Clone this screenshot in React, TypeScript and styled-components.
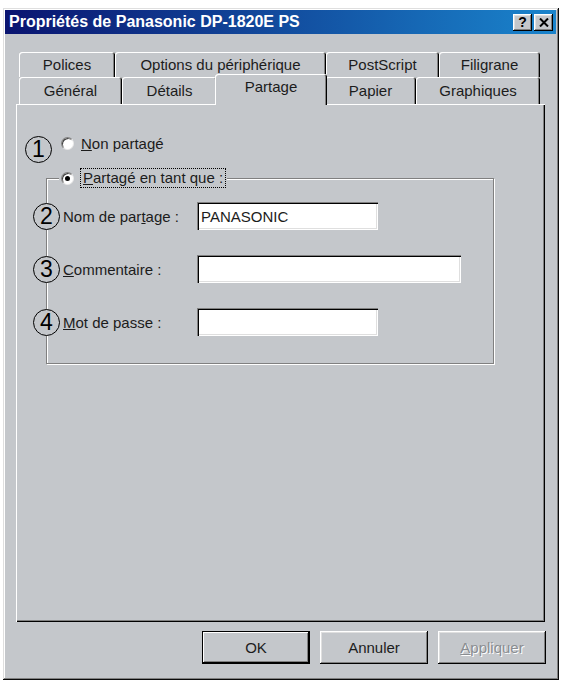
import styled, { createGlobalStyle } from 'styled-components';

const FACE = '#c4c7cb';

const GlobalStyle = createGlobalStyle`
  html, body {
    margin: 0;
    padding: 0;
    background: #fff;
  }
  body {
    font-family: "Liberation Sans", Arial, sans-serif;
    color: #1c1c1c;
  }
`;

const row1 = [
  { label: 'Polices', w: 96 },
  { label: 'Options du périphérique', w: 211 },
  { label: 'PostScript', w: 113 },
  { label: 'Filigrane', w: 101 },
];

const row2 = [
  { label: 'Général', w: 103 },
  { label: 'Détails', w: 95 },
  { label: 'Partage', w: 108, active: true },
  { label: 'Papier', w: 91 },
  { label: 'Graphiques', w: 124 },
];

function App() {
  return (
    <>
      <GlobalStyle />
      <Window>
        <TitleBar>
          <Title>Propriétés de Panasonic DP-1820E PS</Title>
          <TitleButtons>
            <TitleButton>?</TitleButton>
            <TitleButton>
              <svg width="10" height="9" viewBox="0 0 10 9">
                <path d="M1 0.5 L9 8.5 M9 0.5 L1 8.5" stroke="#000" strokeWidth="2" />
              </svg>
            </TitleButton>
          </TitleButtons>
        </TitleBar>

        <Body>
          <TabStrip>
            <TabRow $h={25}>
              {row1.map((t) => (
                <Tab key={t.label} $w={t.w}>
                  {t.label}
                </Tab>
              ))}
            </TabRow>
            <TabRow $h={27}>
              {row2.map((t) => (
                <Tab key={t.label} $w={t.w} $active={t.active}>
                  {t.label}
                </Tab>
              ))}
            </TabRow>
          </TabStrip>

          <Panel>
            <Callout $float>1</Callout>
            <RadioRow>
              <Radio />
              <span>
                <u>N</u>on partagé
              </span>
            </RadioRow>

            <Group>
              <Legend>
                <RadioRow>
                  <Radio $checked />
                  <FocusText>
                    <u>P</u>artagé en tant que :
                  </FocusText>
                </RadioRow>
              </Legend>
              <FieldList>
                <Field>
                  <Callout>2</Callout>
                  <Label>
                    Nom de par<u>t</u>age :
                  </Label>
                  <TextBox $w={181} readOnly value="PANASONIC" />
                </Field>
                <Field>
                  <Callout>3</Callout>
                  <Label>
                    <u>C</u>ommentaire :
                  </Label>
                  <TextBox $w={264} readOnly value="" />
                </Field>
                <Field>
                  <Callout>4</Callout>
                  <Label>
                    <u>M</u>ot de passe :
                  </Label>
                  <TextBox $w={181} readOnly value="" />
                </Field>
              </FieldList>
            </Group>
          </Panel>

          <ButtonRow>
            <Button $default>OK</Button>
            <Button>Annuler</Button>
            <Button $disabled>
              <u>A</u>ppliquer
            </Button>
          </ButtonRow>
        </Body>
      </Window>
    </>
  );
}

export default App;

const Window = styled.div`
  box-sizing: border-box;
  margin: 8px 0 0 3px;
  width: 556px;
  height: 672px;
  padding: 2px 3px 3px 2px;
  background: ${FACE};
  box-shadow: inset -1px -1px #0a0a0a, inset 1px 1px #dfdfdf,
    inset -2px -2px #808080, inset 2px 2px #fff;
  display: flex;
  flex-direction: column;
`;

const TitleBar = styled.div`
  height: 24px;
  display: flex;
  align-items: center;
  justify-content: space-between;
  padding: 0 3px 0 4px;
  background: linear-gradient(to right, #0a1470, #1a84cc);
`;

const Title = styled.span`
  color: #fff;
  font-weight: bold;
  font-size: 16px;
  white-space: nowrap;
`;

const TitleButtons = styled.div`
  display: flex;
  gap: 2px;
`;

const TitleButton = styled.div`
  box-sizing: border-box;
  width: 19px;
  height: 17px;
  display: flex;
  align-items: center;
  justify-content: center;
  background: ${FACE};
  font-weight: bold;
  font-size: 14px;
  color: #000;
  box-shadow: inset -1px -1px #000, inset 1px 1px #fff,
    inset -2px -2px #808080, inset 2px 2px #dfdfdf;
`;

const Body = styled.div`
  flex: 1;
  display: flex;
  flex-direction: column;
  padding: 18px 11px 13px 11px;
`;

const TabStrip = styled.div`
  display: flex;
  flex-direction: column;
  margin-left: 3px;
`;

const TabRow = styled.div<{ $h: number }>`
  display: flex;
  height: ${(p) => p.$h}px;
`;

const Tab = styled.div<{ $w: number; $active?: boolean }>`
  box-sizing: border-box;
  width: ${(p) => p.$w}px;
  display: flex;
  align-items: center;
  justify-content: center;
  font-size: 15px;
  background: ${FACE};
  border-radius: 3px 3px 0 0;
  box-shadow: inset 1px 1px #fff, inset -1px 0 #000, inset -2px 0 #808080;
  ${(p) =>
    p.$active &&
    `
    position: relative;
    z-index: 1;
    width: ${p.$w + 4}px;
    margin: -3px -2px -1px -2px;
    padding-bottom: 6px;
  `}
`;

const Panel = styled.div`
  position: relative;
  flex: 1;
  display: flex;
  flex-direction: column;
  align-items: flex-start;
  padding: 30px 0 0 30px;
  background: ${FACE};
  box-shadow: inset 1px 1px #fff, inset -1px -1px #000, inset -2px -2px #808080;
`;

const Callout = styled.span<{ $float?: boolean }>`
  box-sizing: border-box;
  flex: none;
  width: 27px;
  height: 27px;
  border: 1.5px solid #000;
  border-radius: 50%;
  background: ${FACE};
  display: flex;
  align-items: center;
  justify-content: center;
  font-size: 23px;
  line-height: 1;
  color: #000;
  margin-right: 3px;
  ${(p) =>
    p.$float &&
    `
    position: absolute;
    left: 9px;
    top: 32px;
  `}
`;

const RadioRow = styled.div`
  display: flex;
  align-items: center;
  gap: 7px;
  height: 18px;
  margin-left: 15px;
  font-size: 15px;
`;

const Radio = styled.span<{ $checked?: boolean }>`
  box-sizing: border-box;
  width: 13px;
  height: 13px;
  border-radius: 50%;
  background: #fff;
  border: 1px solid;
  border-color: #808080 #e8e8e8 #e8e8e8 #808080;
  box-shadow: inset 1px 1px #404040;
  display: flex;
  align-items: center;
  justify-content: center;
  &::after {
    content: '';
    width: 5px;
    height: 5px;
    border-radius: 50%;
    background: ${(p) => (p.$checked ? '#000' : 'transparent')};
  }
`;

const FocusText = styled.span`
  padding: 0 2px;
  line-height: 18px;
  outline: 1px dotted #000;
`;

const Group = styled.fieldset`
  box-sizing: border-box;
  width: 448px;
  margin: 16px 0 0 0;
  padding: 14px 0 27px 0;
  min-width: 0;
  border: 1px solid #808080;
  box-shadow: inset 1px 1px #fff, 1px 1px #fff;
`;

const Legend = styled.legend`
  margin-left: 12px;
  padding: 0 2px;
  background: ${FACE};
  & > div {
    margin-left: 0;
    height: 20px;
  }
`;

const FieldList = styled.div`
  display: flex;
  flex-direction: column;
  gap: 25px;
`;

const Field = styled.div`
  display: flex;
  align-items: center;
  height: 28px;
  margin-left: -14px;
`;

const Label = styled.span`
  width: 134px;
  font-size: 15px;
  white-space: nowrap;
`;

const TextBox = styled.input<{ $w: number }>`
  box-sizing: border-box;
  width: ${(p) => p.$w}px;
  height: 28px;
  padding: 0 4px;
  border: none;
  outline: none;
  background: #fff;
  font-family: "Liberation Sans", Arial, sans-serif;
  font-size: 15px;
  color: #1c1c1c;
  box-shadow: inset 1px 1px #808080, inset 2px 2px #000,
    inset -1px -1px #fff, inset -2px -2px #dfdfdf;
`;

const ButtonRow = styled.div`
  display: flex;
  justify-content: flex-end;
  gap: 10px;
  margin-top: 9px;
  margin-right: -1px;
`;

const Button = styled.div<{ $default?: boolean; $disabled?: boolean }>`
  box-sizing: border-box;
  width: 108px;
  height: 33px;
  display: flex;
  align-items: center;
  justify-content: center;
  font-size: 15px;
  background: ${FACE};
  color: ${(p) => (p.$disabled ? '#8a8d91' : '#1c1c1c')};
  text-shadow: ${(p) => (p.$disabled ? '1px 1px #fff' : 'none')};
  box-shadow: ${(p) =>
    p.$default
      ? 'inset 0 0 0 1px #000, inset -2px -2px #000, inset 2px 2px #fff, inset -3px -3px #808080'
      : 'inset -1px -1px #000, inset 1px 1px #fff, inset -2px -2px #808080, inset 2px 2px #dfdfdf'};
`;
